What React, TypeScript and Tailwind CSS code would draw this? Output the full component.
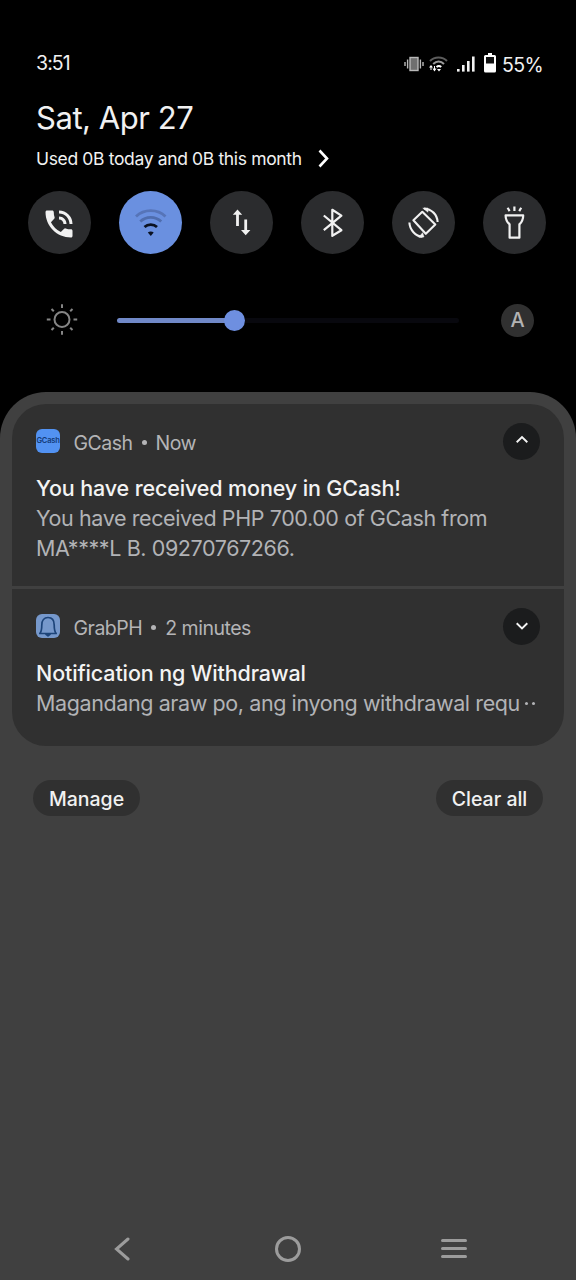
import React from "react";
import { MdPhoneInTalk } from "react-icons/md";

const StatusIcons = () => (
  <div className="flex items-center">
    <svg className="w-5 h-4" viewBox="0 0 20 16" fill="none" stroke="#b9b9b9" strokeWidth="1.4">
      <rect x="6" y="1.5" width="8" height="13" fill="#6f6f6f" />
      <path d="M3.600 3.500v9M16.400 3.500v9M1 6v4M19 6v4" />
    </svg>
    <svg className="w-[19px] h-4 ml-[5px]" viewBox="0 0 19 16" fill="none">
      <path d="M1 5C5.500 .2 13.500 .2 18 5" stroke="#5c5c5c" strokeWidth="2" />
      <path d="M4.200 8C7.500 4.800 11.800 4.800 15 8" stroke="#9b9b9b" strokeWidth="2" />
      <path d="M7.500 11C9 9.700 10.800 9.700 12.200 11" stroke="#fff" strokeWidth="2" />
      <path d="M8 13h4l-2 2.500zM0 11.500l2-2.500 2 2.500zM3.500 12.500h4L5.500 15.500z" fill="#fff" />
      <path d="M2 11v3M5.500 10v3" stroke="#fff" strokeWidth="1" />
    </svg>
    <svg className="w-[18px] h-4 ml-[9px]" viewBox="0 0 18 16" fill="#f2f2f2">
      <rect x="0" y="13" width="2.600" height="2.600" />
      <rect x="5" y="9" width="2.600" height="6.600" />
      <rect x="10" y="5" width="2.600" height="10.600" />
      <rect x="15" y="0.500" width="2.600" height="15.100" />
    </svg>
    <svg className="w-3 h-5 ml-[9px] mb-0.5" viewBox="0 0 12 20">
      <path d="M4 0h4v2h2.500a1.500 1.500 0 0 1 1.500 1.500v14.500a1.500 1.500 0 0 1-1.500 1.500h-9a1.500 1.500 0 0 1-1.500-1.500V3.500a1.500 1.500 0 0 1 1.500-1.500H4z" fill="#fff" />
      <rect x="2" y="4" width="8" height="6.500" fill="#111" />
    </svg>
    <span className="ml-[6px] pt-px text-[19.500px] leading-7 tracking-[-0.600px]">55%</span>
  </div>
);

const WifiIcon = () => (
  <svg className="w-[63px] h-[63px]" viewBox="0 0 63 63" fill="none" strokeWidth="2.800">
    <path d="M17 25.600C25 17.700 38.500 17.700 46.500 25.600" stroke="#5674b8" />
    <path d="M21.300 30.600C27 25 36.400 25 42.200 30.600" stroke="#4f6dae" />
    <path d="M25.500 36C28.900 32.900 34.600 32.900 38 36" stroke="#0b1222" />
    <path d="M28.800 41.500c1.500-1.200 4.400-1.200 5.900 0l-2.900 3.500z" fill="#0b1222" />
  </svg>
);

const DataIcon = () => (
  <svg className="w-[63px] h-[63px]" viewBox="0 0 63 63" fill="none" stroke="#f1f1f1" strokeWidth="2.800">
    <path d="M27.500 21v14M35.700 28.500v13" />
    <path d="M22.800 23.800L27.500 18.500l4.700 5.300zM31 39l4.700 5.300L40.400 39z" fill="#f1f1f1" stroke="none" />
  </svg>
);

const BluetoothIcon = () => (
  <svg className="w-[63px] h-[63px]" viewBox="0 0 63 63" fill="none" stroke="#f1f1f1" strokeWidth="2.200" strokeLinejoin="round">
    <path d="M22.800 24.500L40.400 39.200 31.300 44.800V18.800l9.100 5.800L22.800 39.200" />
  </svg>
);

const RotateIcon = () => (
  <svg className="w-[63px] h-[63px]" viewBox="0 0 63 63" fill="none" stroke="#f1f1f1" strokeWidth="2.100" strokeLinejoin="round">
    <path d="M30.300 20.800L43.300 33.500 33.800 42.800 21.400 29.300z" />
    <path d="M32 17.500C39.500 18 45.300 23.500 45.600 31M17.400 31.500C17.700 39 23.500 45 30.500 45.800" />
    <path d="M30.800 17.200l5.200-.2v4.200zM32 46l-5.200.2 3.800-4.500z" fill="#f1f1f1" strokeWidth="0.500" />
  </svg>
);

const TorchIcon = () => (
  <svg className="w-[63px] h-[63px]" viewBox="0 0 63 63" fill="none" stroke="#f1f1f1" strokeWidth="2.200" strokeLinejoin="round">
    <path d="M22.600 24.400h17.600c0 4.200-1 6.200-3.800 9v13.300h-9.800v-13.300c-3-2.800-4-4.800-4-9z" />
    <path d="M31.400 15.500v4.600M24.600 16.800l2 3.300M38.200 16.800l-2 3.300" />
  </svg>
);

const Tile = ({ active, children }: { active?: boolean; children: React.ReactNode }) => (
  <button
    className={
      active
        ? "w-[63px] h-[63px] rounded-full flex items-center justify-center bg-[#6a90e0]"
        : "w-[63px] h-[63px] rounded-full flex items-center justify-center bg-[#2b2c2e]"
    }
  >
    {children}
  </button>
);

const SunIcon = () => (
  <svg className="w-8 h-8" viewBox="0 0 32 32" fill="none" stroke="#858585" strokeWidth="2">
    <circle cx="16" cy="15.500" r="7.500" />
    <path d="M16 .3v3.700M16 27v3.700M.8 15.500h3.700M27.500 15.500h3.700M5.500 5l2.300 2.300M24.200 23.700l2.300 2.300M5.500 26l2.300-2.300M24.200 7.300l2.300-2.300" />
  </svg>
);

const BellIcon = () => (
  <svg className="w-6 h-6" viewBox="0 0 24 24" fill="none" stroke="#1d4479" strokeWidth="1.700" strokeLinejoin="round">
    <path d="M3.800 19.500c1.800-2.100 2-4 2-8.500C5.800 6.300 8.200 3.500 12 3.500s6.200 2.800 6.200 7.500c0 4.500.2 6.400 2 8.500z" />
    <path d="M10 20.300h4l-2 1.500z" fill="#1d4479" />
  </svg>
);

const Notification = ({
  icon,
  app,
  time,
  title,
  open,
  children,
}: {
  icon: React.ReactNode;
  app: React.ReactNode;
  time: React.ReactNode;
  title: React.ReactNode;
  open?: boolean;
  children: React.ReactNode;
}) => (
  <div className="px-6 pt-[18.500px]">
    <div className="flex items-center h-[37px]">
      {icon}
      <div className="flex items-center ml-[13.500px] pt-[3px] text-[19.500px] leading-6 tracking-[-0.500px] text-[#b4b4b6]">
        <span>{app}</span>
        <span className="w-[5px] h-[5px] mx-[9px] rounded-full bg-[#b4b4b6]" />
        <span>{time}</span>
      </div>
      <button className="w-[37px] h-[37px] ml-auto rounded-full flex items-center justify-center bg-[#1b1c1d]">
        <svg className="w-4 h-4" viewBox="0 0 16 16" fill="none" stroke="#f3f3f3" strokeWidth="1.900">
          <path d={open ? "M2.700 9.300L8 4.100l5.300 5.200" : "M2.700 5.300L8 10.500l5.300-5.200"} />
        </svg>
      </button>
    </div>
    <h2 className="mt-[13.500px] text-[21.500px] leading-[30px] font-medium tracking-[-0.130px] text-[#f3f3f3] whitespace-nowrap">{title}</h2>
    <div className="text-[21.500px] leading-[30px] tracking-[-0.400px] text-[#b2b3b6] whitespace-nowrap">{children}</div>
  </div>
);

const App = () => {
  return (
    <div className="w-[576px] h-[1280px] overflow-hidden flex flex-col bg-black text-[#f1f1f1] font-['Inter',sans-serif]">
      <div className="h-[392px] flex flex-col">
        <div className="mt-[50px] h-7 pl-9 pr-[33px] flex items-center justify-between">
          <span className="pb-[3px] text-[19.500px] leading-6 tracking-[-0.900px]">3:51</span>
          <StatusIcons />
        </div>
        <div className="mt-5 pl-9 text-[31px] leading-10 tracking-[-0.450px]">Sat, Apr 27</div>
        <div className="mt-[9px] pl-9 flex items-center h-6 text-[17.500px] tracking-[-0.350px]">
          <span className="pt-px">Used 0B today and 0B this month</span>
          <svg className="w-3 h-5 ml-4" viewBox="0 0 12 20" fill="none" stroke="#fff" strokeWidth="2.600">
            <path d="M1.500 1.500L9 9.500 1.500 17.500" />
          </svg>
        </div>
        <div className="mt-[19.500px] pl-[27.500px] pr-[29.500px] flex justify-between">
          <Tile><MdPhoneInTalk className="w-9 h-9 mt-[3px] text-[#f1f1f1]" /></Tile>
          <Tile active><WifiIcon /></Tile>
          <Tile><DataIcon /></Tile>
          <Tile><BluetoothIcon /></Tile>
          <Tile><RotateIcon /></Tile>
          <Tile><TorchIcon /></Tile>
        </div>
        <div className="mt-[49.500px] pl-[46px] pr-[42px] h-[34px] flex items-center">
          <SunIcon />
          <div className="ml-[39px] w-[342px] h-[21px] flex items-center">
            <div className="w-[108px] h-[5px] rounded-l-full bg-[#7189c8]" />
            <div className="w-[21px] h-[21px] -ml-px rounded-full bg-[#6e8fe0]" />
            <div className="flex-1 h-[5px] rounded-r-full bg-[#08080e]" />
          </div>
          <div className="w-[33px] h-[33px] ml-auto rounded-full flex items-center justify-center bg-[#303030] text-[#b3b3b3] text-[20px] font-medium">
            A
          </div>
        </div>
      </div>

      <div className="flex-1 flex flex-col px-3 pt-3 rounded-t-[46px] bg-[#404040]">
        <div className="h-[342px] flex flex-col gap-[3px] rounded-[34px] overflow-hidden">
          <div className="h-[182px] bg-[#303030]">
            <Notification
              open
              icon={
                <div className="w-6 h-6 rounded-md flex items-center justify-center bg-[#5292f2] text-[#123a78] text-[7.500px] font-semibold tracking-[-0.200px]">
                  GCash
                </div>
              }
              app="GCash"
              time="Now"
              title="You have received money in GCash!"
            >
              <p>You have received PHP 700.00 of GCash from</p>
              <p>MA****L B. 09270767266.</p>
            </Notification>
          </div>
          <div className="flex-1 bg-[#303030]">
            <Notification
              icon={<div className="w-6 h-6 rounded-md bg-[#7698cb]"><BellIcon /></div>}
              app="GrabPH"
              time="2 minutes"
              title="Notification ng Withdrawal"
            >
              <p className="flex items-center">
                <span>Magandang araw po, ang inyong withdrawal requ</span>
                <span className="w-[3px] h-[3px] ml-[5px] rounded-full bg-[#b2b3b6]" />
                <span className="w-[3px] h-[3px] ml-1 rounded-full bg-[#b2b3b6]" />
              </p>
            </Notification>
          </div>
        </div>

        <div className="mt-[34px] px-[21px] flex justify-between text-[19.500px] leading-6 font-medium">
          <button className="w-[107px] h-9 pt-0.5 rounded-full bg-[#303030]">Manage</button>
          <button className="w-[107px] h-9 pt-0.5 rounded-full bg-[#303030]">Clear all</button>
        </div>

        <div className="mt-auto h-[63px] pl-[102px] pr-[97px] flex items-center justify-between">
          <svg className="w-4 h-[26px]" viewBox="0 0 16 26" fill="none" stroke="#9c9c9c" strokeWidth="3" strokeLinecap="round">
            <path d="M14 3L2.500 13 14 23" />
          </svg>
          <div className="w-[26px] h-[26px] ml-[5px] rounded-full border-[3px] border-[#9c9c9c]" />
          <div className="w-[26px] flex flex-col gap-[5px]">
            <div className="h-[3px] rounded-full bg-[#9c9c9c]" />
            <div className="h-[3px] rounded-full bg-[#9c9c9c]" />
            <div className="h-[3px] rounded-full bg-[#9c9c9c]" />
          </div>
        </div>
      </div>
    </div>
  );
};

export default App;
